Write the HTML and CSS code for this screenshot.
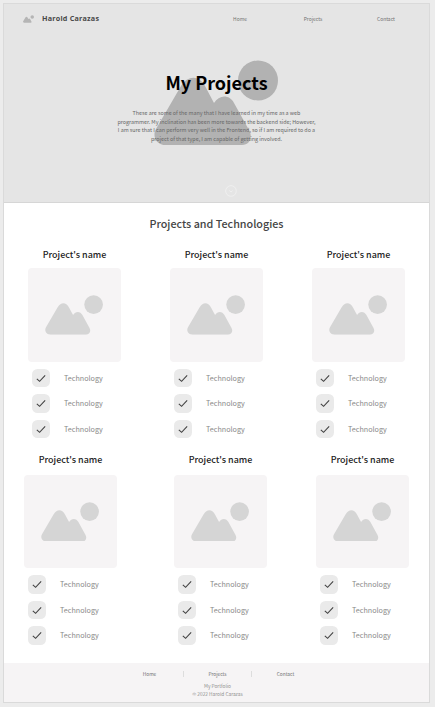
FILE: index.html
```html
<!DOCTYPE html>
<html lang="en">
<head>
<meta charset="utf-8">
<title>My Projects</title>
<link rel="stylesheet" href="styles.css">
</head>
<body>
<svg class="defs" aria-hidden="true">
  <symbol id="picture" viewBox="0 0 124 85">
    <circle cx="104" cy="20.5" r="20"/>
    <path d="M12 85 C2 85 -2 76 2 69 L27 26 C34 15 45 15 51 26 L60 43 C65 35 75 34 80 43 L95 70 C99 77 96 85 88 85 Z"/>
  </symbol>
  <symbol id="check" viewBox="0 0 18 18">
    <path d="M4.7 9.6 L7.4 12 L12.8 6.3" fill="none" stroke="#444" stroke-width="1.1"/>
  </symbol>
</svg>
<div class="page">
  <header class="hero">
    <nav class="topbar">
      <svg class="logo"><use href="#picture"/></svg>
      <span class="brand">Harold Carazas</span>
      <a class="n1">Home</a><a class="n2">Projects</a><a class="n3">Contact</a>
    </nav>
    <svg class="backdrop"><use href="#picture"/></svg>
    <h1>My Projects</h1>
    <p class="intro">These are some of the many that I have learned in my time as a web<br>programmer. My inclination has been more towards the backend side; However,<br>I am sure that I can perform very well in the Frontend, so if I am required to do a<br>project of that type, I am capable of getting involved.</p>
    <svg class="down" viewBox="0 0 12 12"><circle cx="6" cy="6" r="5.3"/><path d="M4.3 5.5 L6 7 L7.7 5.5"/></svg>
  </header>
  <main>
    <h2>Projects and Technologies</h2>
    <div class="row first" id="first"></div>
    <div class="row second" id="second"></div>
  </main>
  <footer>
    <div class="links"><a>Home</a><i></i><a>Projects</a><i></i><a>Contact</a></div>
    <p>My Portfolio</p>
    <p>© 2022 Harold Carazas</p>
  </footer>
</div>
<script src="script.js"></script>
</body>
</html>
```
FILE: styles.css
```css
* { box-sizing: border-box; margin: 0; padding: 0; }
body { background: #ececec; font-family: "Noto Sans CJK SC", "Noto Sans", sans-serif; }
.defs { position: absolute; width: 0; height: 0; }
.page { width: 427px; height: 700px; margin: 3px 0 0 3px; background: #fff; border: 1px solid #dadada; }
.hero { position: relative; height: 199px; background: #e5e5e5; border-bottom: 1px solid #d6d6d6; text-align: center; }
.topbar { height: 30px; display: flex; align-items: center; padding-left: 18.5px; }
.logo { width: 11px; height: 8px; fill: #b5b5b5; }
.brand { margin: -2px 0 0 8.5px; width: 58px; text-align: left; font: 700 7.2px/10px "Open Sans", sans-serif; letter-spacing: .22px; color: #484848; white-space: nowrap; }
.topbar a { font-size: 4.9px; line-height: 8px; color: #707070; text-align: center; width: 30px; }
.n1 { margin-left: 125px; }
.n2 { margin-left: 43px; }
.n3 { margin-left: 43px; }
.backdrop { position: absolute; left: 150px; top: 56px; width: 124px; height: 85px; fill: #b2b2b2; }
h1 { position: relative; margin-top: 35px; font-size: 18px; line-height: 26px; font-weight: 700; color: #000; }
.intro { position: relative; margin-top: 14px; font-size: 5.36px; line-height: 8.65px; color: #666; white-space: nowrap; }
.down { display: block; width: 12px; height: 12px; margin: 41.5px 0 0 220.5px; fill: none; stroke: #f0f0f0; stroke-width: .9; }
main { height: 460px; padding-top: 12px; }
h2 { font-size: 10.75px; line-height: 18px; font-weight: 500; color: #444; text-align: center; }
.row { display: flex; }
.first { margin: 14px 0 0 24px; gap: 49px; height: 206px; }
.second { margin-left: 20px; gap: 49px; }
.second .project:first-child { margin-right: 8px; }
.second h3 { height: 21.5px; line-height: 14px; }
.project { width: 93px; }
h3 { font-size: 8.95px; line-height: 15px; height: 21px; font-weight: 500; color: #1c1c1c; text-align: center; white-space: nowrap; }
.thumb { height: 93.5px; border-radius: 4px; background: #f6f4f5; padding: 27.2px 0 0 17.3px; }
.thumb svg { display: block; width: 58px; height: 39.7px; fill: #d5d5d5; }
ul { list-style: none; margin: 7px 0 0 3.5px; }
li { display: flex; align-items: center; height: 18.6px; margin-bottom: 7px; font-size: 7.2px; line-height: 12px; color: #888; }
.box { width: 18.5px; height: 18.5px; margin-right: 14px; border-radius: 5.5px; background: #eaeaea; }
.box svg { display: block; width: 18.5px; height: 18.5px; }
footer { height: 39px; background: #f6f4f5; padding-top: 6.5px; text-align: center; font-size: 4.8px; color: #909090; }
.links { display: flex; align-items: center; justify-content: center; height: 8px; margin: 0 0 4px 2px; color: #707070; }
.links a { width: 68px; line-height: 8px; }
.links i { width: 1px; height: 6px; margin: 0 -.5px; background: #ddd; }
footer p { margin-left: 2px; line-height: 8px; }
```
FILE: script.js
```js
const tech = '<li><span class="box"><svg><use href="#check"/></svg></span>Technology</li>';
const project = `<section class="project"><h3>Project's name</h3><div class="thumb"><svg><use href="#picture"/></svg></div><ul>${tech.repeat(3)}</ul></section>`;
for (const id of ["first", "second"]) {
  document.getElementById(id).innerHTML = project.repeat(3);
}
```
